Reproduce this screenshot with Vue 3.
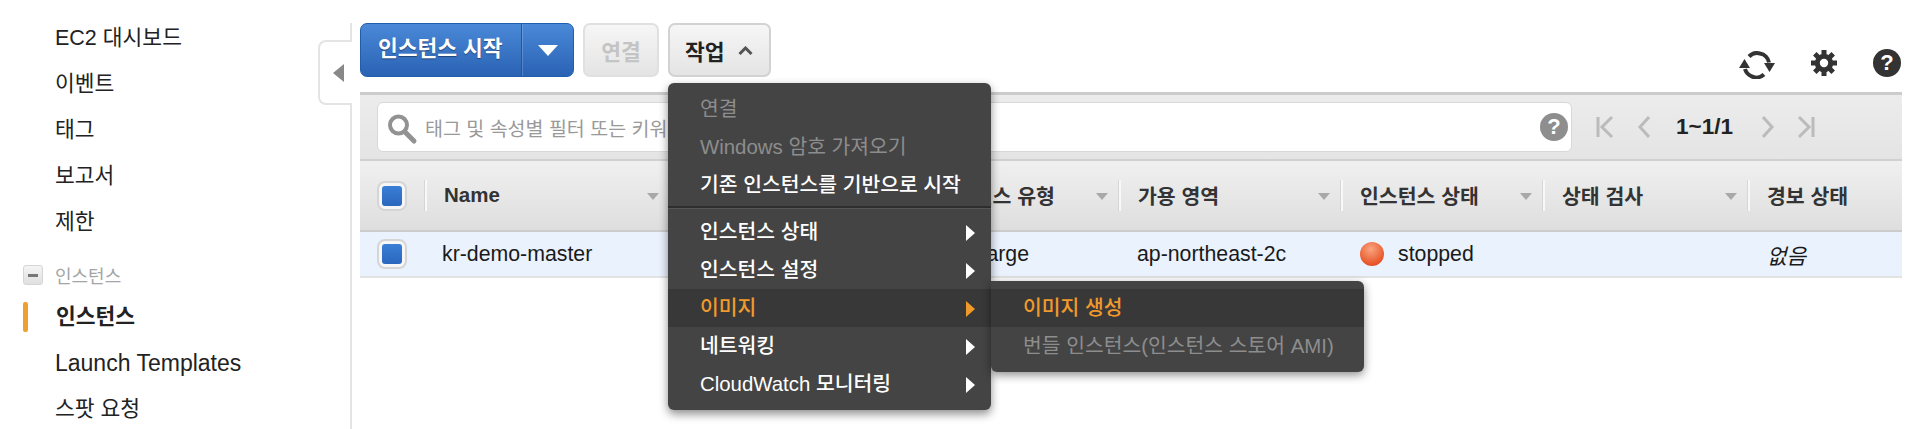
<script setup>
const navTop = ['EC2 대시보드', '이벤트', '태그', '보고서', '제한']
const columns = [
  { label: 'Name', width: 245, sort: true },
  { label: '인스턴스 ID', width: 247, sort: true },
  { label: '인스턴스 유형', width: 202, sort: true },
  { label: '가용 영역', width: 222, sort: true },
  { label: '인스턴스 상태', width: 202, sort: true },
  { label: '상태 검사', width: 205, sort: true },
  { label: '경보 상태', width: 154, sort: false }
]
const menuTop = [
  { label: '연결', disabled: true },
  { label: 'Windows 암호 가져오기', disabled: true },
  { label: '기존 인스턴스를 기반으로 시작' }
]
const menuBottom = [
  { label: '인스턴스 상태' },
  { label: '인스턴스 설정' },
  { label: '이미지', active: true },
  { label: '네트워킹' },
  { label: 'CloudWatch 모니터링' }
]
</script>

<template>
  <div class="page">
    <aside class="side">
      <ul class="nav">
        <li v-for="n in navTop" :key="n">{{ n }}</li>
      </ul>
      <div class="section"><span class="minus"><i></i></span><span>인스턴스</span></div>
      <ul class="nav">
        <li class="current">인스턴스</li>
        <li class="latin">Launch Templates</li>
        <li>스팟 요청</li>
      </ul>
      <div class="toggler"><i></i></div>
    </aside>

    <main class="main">
      <div class="toolbar">
        <div class="split">
          <span class="split-label">인스턴스 시작</span>
          <span class="split-caret"><i></i></span>
        </div>
        <button class="btn disabled">연결</button>
        <div class="actions">
          <button class="btn">작업
            <svg width="15" height="9" viewBox="0 0 15 9"><path d="M1.500 8 7.500 2l6 6" fill="none" stroke="#555" stroke-width="3"/></svg>
          </button>

          <div class="menu">
            <div v-for="m in menuTop" :key="m.label" class="item" :class="{ off: m.disabled }">{{ m.label }}</div>
            <div class="sep"></div>
            <div v-for="m in menuBottom" :key="m.label" class="item" :class="{ on: m.active }">
              {{ m.label }}<i class="arrow"></i>
            </div>
            <div class="submenu">
              <div class="item on">이미지 생성</div>
              <div class="item off">번들 인스턴스(인스턴스 스토어 AMI)</div>
            </div>
          </div>
        </div>

        <div class="tools">
          <svg class="refresh" width="36" height="28" viewBox="0 0 36 28">
            <path d="M10 5.500a11 11 0 0 1 11-3 11 11 0 0 1 9 9" fill="none" stroke="#333" stroke-width="4"/>
            <path d="M25 12h11l-5.500 9z" fill="#333"/>
            <path d="M6 18a11 11 0 0 0 6 7 11 11 0 0 0 13-1.500" fill="none" stroke="#333" stroke-width="4"/>
            <path d="M0 17h11L5.500 8z" fill="#333"/>
          </svg>
          <svg class="gear" width="26" height="26" viewBox="0 0 26 26">
            <circle cx="13" cy="13" r="6.700" fill="none" stroke="#333" stroke-width="5"/>
            <path d="M13 0v6M13 20v6M0 13h6M20 13h6M3.800 3.800l4.200 4.200M18 18l4.200 4.200M3.800 22.200 8 18M18 8l4.200-4.200" stroke="#333" stroke-width="5"/>
          </svg>
          <span class="qmark dark">?</span>
        </div>
      </div>

      <div class="filter">
        <div class="search">
          <svg width="32" height="36" viewBox="0 0 32 36">
            <circle cx="10.500" cy="16" r="8.500" fill="none" stroke="#929292" stroke-width="4"/>
            <path d="M17 23l9 9" stroke="#929292" stroke-width="5" stroke-linecap="round"/>
          </svg>
          <span class="placeholder">태그 및 속성별 필터 또는 키워드별 검색</span>
          <span class="qmark grey">?</span>
        </div>
        <div class="pager">
          <svg width="18" height="24" viewBox="0 0 18 24"><path d="M2 2v20M16 2 6 12l10 10" fill="none" stroke="#bbb" stroke-width="3"/></svg>
          <svg width="12" height="24" viewBox="0 0 12 24"><path d="M11 2 2 12l9 10" fill="none" stroke="#bbb" stroke-width="3"/></svg>
          <b>1~1/1</b>
          <svg width="12" height="24" viewBox="0 0 12 24"><path d="M1 2l9 10-9 10" fill="none" stroke="#bbb" stroke-width="3"/></svg>
          <svg width="18" height="24" viewBox="0 0 18 24"><path d="M2 2l10 10L2 22M16 2v20" fill="none" stroke="#bbb" stroke-width="3"/></svg>
        </div>
      </div>

      <div class="thead">
        <div class="check-cell"><span class="check"><i></i></span></div>
        <div v-for="c in columns" :key="c.label" class="th" :style="{ width: c.width + 'px' }">
          <span>{{ c.label }}</span>
          <i v-if="c.sort" class="sort"></i>
        </div>
      </div>

      <div class="row">
        <div class="check-cell"><span class="check"><i></i></span></div>
        <div class="td name">kr-demo-master</div>
        <div class="td id"></div>
        <div class="td type">t2.large</div>
        <div class="td az">ap-northeast-2c</div>
        <div class="td state"><i class="dot"></i>stopped</div>
        <div class="td checks"></div>
        <div class="td alarm">없음</div>
      </div>
    </main>
  </div>
</template>

<style>
html, body { margin: 0; background: #fff; }
</style>

<style scoped>
.page {
  display: flex;
  height: 429px;
  overflow: hidden;
  font-family: "Liberation Sans", "Noto Sans CJK KR", sans-serif;
  font-size: 21.300px;
  color: #222;
  background: #fff;
}
ul { list-style: none; margin: 0; padding: 0; }
.side {
  position: relative;
  width: 352px;
  flex: none;
  padding-top: 15px;
  box-sizing: border-box;
  font-size: 21.500px;
}
.side::after {
  content: "";
  position: absolute;
  right: 0;
  top: 23px;
  bottom: 0;
  width: 2px;
  background: #e4e4e4;
}
.nav li {
  height: 46px;
  line-height: 46px;
  padding-left: 55px;
  white-space: nowrap;
}
.nav .latin { font-size: 23px; }
.section {
  display: flex;
  align-items: center;
  height: 24px;
  margin-top: 18px;
  padding-left: 23px;
  gap: 12px;
  font-size: 18px;
  color: #a5a5a5;
}
.minus {
  width: 20px;
  height: 20px;
  box-sizing: border-box;
  border: 1px solid #d5d5d5;
  border-radius: 3px;
  background: linear-gradient(#f4f4f4, #e0e0e0);
  display: flex;
  align-items: center;
  justify-content: center;
}
.minus i { width: 10px; height: 3px; background: #777; }
.section + .nav { margin-top: 7px; }
.nav .current {
  position: relative;
  font-weight: bold;
  padding-left: 56px;
}
.nav .current::before {
  content: "";
  position: absolute;
  left: 23px;
  top: 8px;
  width: 5px;
  height: 30px;
  border-radius: 2px;
  background: #f0a030;
}
.toggler {
  position: absolute;
  top: 40px;
  right: 0;
  width: 34px;
  height: 65px;
  box-sizing: border-box;
  border: 2px solid #e4e4e4;
  border-right: 0;
  border-radius: 8px 0 0 8px;
  background: #fff;
  z-index: 1;
  display: flex;
  align-items: center;
  justify-content: center;
}
.toggler i {
  border: 9px solid transparent;
  border-left: 0;
  border-right: 11px solid #888;
  margin-left: 4px;
}

.main {
  flex: 1;
  min-width: 0;
  padding: 23px 18px 0 8px;
}
.toolbar {
  display: flex;
  align-items: flex-start;
  height: 54px;
  margin-bottom: 15px;
}
.split {
  display: flex;
  height: 54px;
  width: 214px;
  box-sizing: border-box;
  border: 1px solid #1f5eae;
  border-radius: 7px;
  background: linear-gradient(#4a89d8, #2a62b4);
  color: #fff;
  font-weight: bold;
  font-size: 21.500px;
}
.split-label {
  width: 161px;
  box-sizing: border-box;
  padding-left: 17px;
  line-height: 50px;
  white-space: nowrap;
  text-shadow: 0 1px 1px rgba(0, 0, 0, .4);
  border-right: 1px solid #2056a6;
}
.split-caret { flex: 1; display: flex; align-items: center; justify-content: center; box-shadow: inset 1px 0 0 rgba(255,255,255,.18); }
.split-caret i {
  border: 10px solid transparent;
  border-bottom: 0;
  border-top: 11px solid #fff;
}
.btn {
  height: 54px;
  box-sizing: border-box;
  border: 2px solid #d2d2d2;
  border-radius: 7px;
  background: linear-gradient(#f6f6f6, #e4e4e4);
  font: inherit;
  font-size: 21.500px;
  font-weight: bold;
  color: #222;
  padding: 0 15px;
  display: flex;
  align-items: center;
  gap: 13px;
}
.btn.disabled {
  width: 76px;
  margin-left: 9px;
  justify-content: center;
  padding: 0;
  color: #c4c4c4;
  border-color: #e0e0e0;
}
.actions { position: relative; margin-left: 9px; }
.actions .btn { width: 103px; }
.tools {
  margin-left: auto;
  display: flex;
  align-items: center;
  gap: 36px;
  height: 46px;
  margin-top: 17px;
  padding-right: 1px;
}
.refresh { margin-top: 4px; }
.qmark {
  width: 28px;
  height: 28px;
  border-radius: 50%;
  color: #fff;
  font-weight: bold;
  font-size: 22px;
  line-height: 28px;
  text-align: center;
}
.qmark.dark { background: #333; }
.qmark.grey { background: #8e8e8e; margin-left: auto; margin-right: 3px; }

.menu {
  position: absolute;
  left: 0;
  top: 60px;
  width: 323px;
  height: 327px;
  box-sizing: border-box;
  padding-top: 7px;
  background: #444;
  border-radius: 6px;
  box-shadow: 0 4px 10px rgba(0, 0, 0, .45);
  z-index: 5;
  font-size: 20.400px;
}
.item {
  position: relative;
  height: 38px;
  line-height: 38px;
  padding-left: 32px;
  color: #fff;
  font-weight: 500;
  white-space: nowrap;
}
.item.off { color: #8d8d8d; font-weight: 400; }
.item.on { background: #383838; color: #f09a2c; }
.sep { height: 2px; margin: 2px 0 5px; background: #2e2e2e; box-shadow: 0 1px 0 #555; }
.arrow {
  position: absolute;
  right: 16px;
  top: 12px;
  border: 8px solid transparent;
  border-right: 0;
  border-left: 9px solid #fff;
}
.item.on .arrow { border-left-color: #f09a2c; }
.submenu {
  position: absolute;
  left: 323px;
  top: 198px;
  width: 373px;
  height: 91px;
  box-sizing: border-box;
  padding-top: 8px;
  background: #444;
  border-radius: 0 6px 6px 6px;
  box-shadow: 0 3px 10px rgba(0, 0, 0, .45);
}

.filter {
  display: flex;
  align-items: center;
  height: 69px;
  box-sizing: border-box;
  border-top: 3px solid #ccc;
  border-bottom: 2px solid #d0d0d0;
  padding: 0 0 0 17px;
  background: linear-gradient(#ececec, #e4e4e4);
}
.search {
  width: 1195px;
  height: 50px;
  box-sizing: border-box;
  border: 1px solid #d8d8d8;
  border-radius: 6px;
  background: #fff;
  display: flex;
  align-items: center;
  padding-left: 10px;
  gap: 5px;
}
.placeholder { color: #999; font-size: 19.500px; white-space: nowrap; }
.pager {
  display: flex;
  align-items: center;
  margin-left: 24px;
}
.pager svg:nth-child(1) { margin-right: 24px; }
.pager b { margin: 0 29px 0 26px; font-size: 22.500px; }
.pager svg:nth-child(4) { margin-right: 23px; }

.thead {
  display: flex;
  height: 71px;
  box-sizing: border-box;
  border-bottom: 2px solid #ccc;
  background: linear-gradient(#f0f0f0, #dedede);
}
.check-cell {
  width: 65px;
  flex: none;
  box-sizing: border-box;
  padding-left: 17px;
  display: flex;
  align-items: center;
}
.check {
  width: 30px;
  height: 30px;
  box-sizing: border-box;
  border: 2px solid #d5d5d5;
  border-radius: 8px;
  background: #f6f6f6;
  display: flex;
  align-items: center;
  justify-content: center;
}
.check i {
  width: 20px;
  height: 20px;
  border-radius: 3px;
  background: linear-gradient(#3a7ed6, #2a67bd);
}
.th {
  position: relative;
  flex: none;
  box-sizing: border-box;
  display: flex;
  align-items: center;
  font-weight: bold;
  font-size: 20.500px;
  color: #333;
  padding-left: 19px;
  padding-bottom: 2px;
  white-space: nowrap;
}
.th::before {
  content: "";
  position: absolute;
  left: 0;
  top: 19px;
  bottom: 19px;
  width: 2px;
  background: #f8f8f8;
  box-shadow: -1px 0 0 #d6d6d6;
}
.sort {
  position: absolute;
  right: 11px;
  top: 32px;
  border: 6px solid transparent;
  border-bottom: 0;
  border-top: 7px solid #a8a8a8;
}
.row {
  display: flex;
  height: 46px;
  box-sizing: border-box;
  border-bottom: 2px solid #e2e2e2;
  background: #eaf2fd;
  align-items: center;
  color: #1a1a1a;
}
.td { flex: none; box-sizing: border-box; padding-left: 17px; white-space: nowrap; }
.name { width: 245px; }
.id { width: 247px; }
.type { width: 202px; padding-left: 41px; }
.az { width: 222px; padding-left: 18px; }
.state { width: 202px; padding-left: 19px; display: flex; align-items: center; gap: 14px; }
.checks { width: 205px; }
.alarm { width: 154px; padding-left: 19px; font-style: italic; }
.dot {
  width: 24px;
  height: 24px;
  border-radius: 50%;
  background: radial-gradient(circle at 45% 30%, #f9a580, #e8562a 70%, #cf4a22);
}
</style>
